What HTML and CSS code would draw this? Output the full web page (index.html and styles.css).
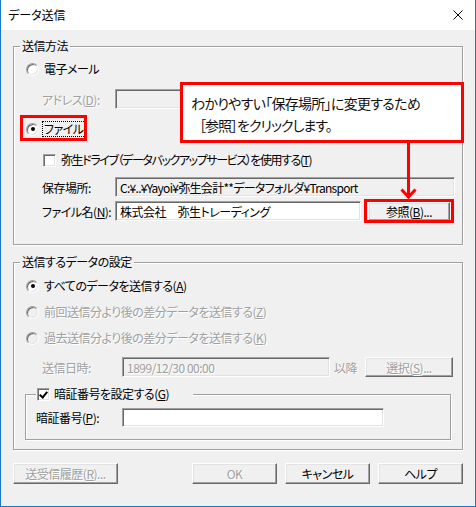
FILE: index.html
```html
<!DOCTYPE html>
<html lang="ja">
<head>
<meta charset="utf-8">
<link rel="stylesheet" href="styles.css">
</head>
<body>
<div class="window">
  <div class="titlebar">
    <span class="title">データ送信</span>
    <svg class="close" width="10" height="10" viewBox="0 0 10 10"><path d="M0.5 0.5L9.5 9.5M9.5 0.5L0.5 9.5" stroke="#000" stroke-width="1" fill="none"/></svg>
  </div>
  <div class="body">
    <fieldset class="group g1">
      <legend>送信方法</legend>
      <div class="row r-mail"><span class="radio"></span><span class="lbl">電子メール</span></div>
      <div class="row r-addr indent"><span class="flabel dis">アドレス(<u>D</u>):</span><span class="edit ro wide"></span></div>
      <div class="row r-file"><span class="radio checked"></span><span class="lbl focus">ファイル</span></div>
      <div class="row r-drive indent1"><span class="check"></span><span class="lbl drive">弥生ドライブ（データバックアップサービス）を使用する(<u>T</u>)</span></div>
      <div class="row r-loc indent"><span class="flabel">保存場所:</span><span class="edit ro wide path">C:¥..¥Yayoi¥弥生会計**データフォルダ¥Transport</span></div>
      <div class="row r-name indent"><span class="flabel">ファイル名(<u>N</u>):</span><span class="edit name">株式会社　弥生トレーディング</span><span class="btn browse">参照(<u>B</u>)...</span></div>
    </fieldset>
    <fieldset class="group g2">
      <legend>送信するデータの設定</legend>
      <div class="row r-all"><span class="radio checked"></span><span class="lbl">すべてのデータを送信する(<u>A</u>)</span></div>
      <div class="row r-prev dis"><span class="radio off"></span><span class="lbl">前回送信分より後の差分データを送信する(<u>Z</u>)</span></div>
      <div class="row r-past dis"><span class="radio off"></span><span class="lbl">過去送信分より後の差分データを送信する(<u>K</u>)</span></div>
      <div class="row r-date indent"><span class="flabel dlabel dis">送信日時:</span><span class="edit ro date dis">1899/12/30 00:00</span><span class="after dis">以降</span><span class="btn select dis">選択(<u>S</u>)...</span></div>
      <fieldset class="inner">
        <legend><span class="check checked"></span><span class="lbl">暗証番号を設定する(<u>G</u>)</span></legend>
        <div class="row r-pin"><span class="flabel plabel">暗証番号(<u>P</u>):</span><span class="edit pin"></span></div>
      </fieldset>
    </fieldset>
    <div class="buttons">
      <span class="btn hist dis">送受信履歴(<u>R</u>)...</span>
      <span class="btn ok dis">OK</span>
      <span class="btn">キャンセル</span>
      <span class="btn">ヘルプ</span>
    </div>
  </div>

  <div class="mark mark-file"></div>
  <div class="mark mark-browse"></div>
  <div class="callout">
    <p class="c1">わかりやすい「保存場所」に変更するため</p>
    <p class="c2">［参照］をクリックします。</p>
  </div>
  <svg class="arrow" width="22" height="60" viewBox="0 0 22 60">
    <path d="M10.5 0V56" stroke="#f00" stroke-width="3" fill="none"/>
    <path d="M3.5 47.5L10.5 55L17.5 47.5" stroke="#f00" stroke-width="3" fill="none" stroke-linejoin="miter"/>
  </svg>
</div>
</body>
</html>
```
FILE: styles.css
```css
* { box-sizing: border-box; }
body {
  margin: 0;
  font-family: "Noto Sans CJK JP", "Noto Sans", sans-serif;
  font-size: 12px;
  color: #000;
  font-feature-settings: "palt";
  letter-spacing: -0.5px;
}
u { text-decoration: underline; text-underline-offset: 1px; }
.window {
  position: relative;
  width: 476px;
  height: 507px;
  background: #f0f0f0;
  border: 1px solid #1979ca;
  border-top: none;
  display: flex;
  flex-direction: column;
}
.titlebar {
  height: 30px;
  flex: none;
  background: #fff;
  display: flex;
  align-items: center;
  padding-left: 7px;
}
.title { font-size: 12px; line-height: 16px; letter-spacing: 0; }
.close { margin-left: auto; margin-right: 12px; }
.body {
  flex: 1;
  padding: 8px 12px 0 12px;
  display: flex;
  flex-direction: column;
}
fieldset {
  margin: 0;
  border: 1px solid #a0a0a0;
  box-shadow: inset 1px 1px #fff, 1px 1px #fff;
  min-width: 0;
}
legend {
  line-height: 16px;
  background: #f0f0f0;
}
.group { padding: 0 7px 23px 12px; }
.group > legend { margin-left: -6px; padding: 0 2px; }
.g2 { margin-top: 9px; padding-bottom: 9px; }
.row { display: flex; align-items: center; height: 16px; white-space: nowrap; }
.indent { padding-left: 16px; }
.indent1 { padding-left: 17px; }
.r-mail { margin-top: 7px; }
.r-addr { margin-top: 12px; height: 20px; }
.r-file { margin-top: 12px; }
.r-drive { margin-top: 15px; }
.r-loc { margin-top: 9px; height: 20px; }
.r-name { margin-top: 4px; height: 20px; }
.r-all { margin-top: 8px; }
.r-prev, .r-past { margin-top: 10px; }
.r-date { margin-top: 11px; height: 20px; }

.lbl { margin-left: 5px; line-height: 14px; }
.drive { letter-spacing: -1.4px; }
.path { letter-spacing: -0.7px; }
.focus { outline: 1px dotted #000; outline-offset: 0; padding: 0 1px; margin-left: 4px; }
.flabel { width: 73px; flex: none; }
.dlabel { width: 80px; }
.dis, .dis .lbl { color: #a0a0a0; text-shadow: 1px 1px 0 #fff; }

.radio {
  flex: none;
  position: relative;
  width: 13px;
  height: 13px;
  border-radius: 50%;
  border: 1px solid;
  border-color: #a0a0a0 #fff #fff #a0a0a0;
  background: #fff;
  box-shadow: inset 1px 1px #696969, inset -1px -1px #e3e3e3;
}
.radio.checked::after {
  content: "";
  position: absolute;
  left: 3.5px;
  top: 3.5px;
  width: 4px;
  height: 4px;
  border-radius: 50%;
  background: #000;
}
.radio.off { background: #f0f0f0; }
.check {
  flex: none;
  display: inline-block;
  position: relative;
  width: 13px;
  height: 13px;
  border: 1px solid;
  border-color: #a0a0a0 #fff #fff #a0a0a0;
  background: #fff;
  box-shadow: inset 1px 1px #696969, inset -1px -1px #e3e3e3;
  vertical-align: middle;
}
.check.checked::after {
  content: "";
  position: absolute;
  left: 3px;
  top: 1px;
  width: 3px;
  height: 6px;
  border: solid #000;
  border-width: 0 2px 2px 0;
  transform: rotate(40deg);
}
.edit {
  flex: none;
  height: 20px;
  border: 1px solid;
  border-color: #a0a0a0 #fff #fff #a0a0a0;
  box-shadow: inset 1px 1px #696969, inset -1px -1px #e3e3e3;
  background: #fff;
  padding: 0 4px;
  display: flex;
  align-items: center;
  white-space: nowrap;
  overflow: hidden;
}
.edit.ro { background: #f0f0f0; }
.wide { width: 340px; }
.name { width: 246px; }
.date { width: 208px; }
.after { margin-left: 4px; }
.btn {
  flex: none;
  display: flex;
  align-items: center;
  justify-content: center;
  height: 20px;
  background: #f0f0f0;
  border: 1px solid;
  border-color: #fff #696969 #696969 #fff;
  box-shadow: inset -1px -1px #a0a0a0, inset 1px 1px #e3e3e3;
  white-space: nowrap;
}
.browse { width: 82px; margin-left: 7px; height: 19px; }
.select { width: 88px; margin-left: 8px; }

.inner {
  margin-top: 10px;
  margin-left: -1px;
  width: 426px;
  padding: 0 8px 12px 10px;
}
.inner > legend {
  padding: 0 24px 0 1px;
  display: flex;
  align-items: center;
}
.inner > legend .lbl { margin-left: 4px; }
.r-pin { margin-top: 7px; height: 19px; }
.plabel { width: 86px; }
.pin { width: 262px; height: 19px; }

.buttons {
  margin-top: 13px;
  display: flex;
  gap: 8px;
}
.buttons .btn { width: 85px; height: 21px; }
.buttons .hist { width: 105px; margin-right: auto; }

.mark { position: absolute; border: 3px solid #f00; }
.mark-file { left: 19px; top: 115px; width: 67px; height: 26px; }
.mark-browse { left: 363px; top: 199px; width: 90px; height: 24px; }
.callout {
  position: absolute;
  left: 179px;
  top: 82px;
  width: 284px;
  height: 61px;
  background: #fff;
  border: 3px solid #f00;
  padding: 7px 0 0 8px;
  font-size: 14px;
  line-height: 22px;
  letter-spacing: -0.7px;
  color: #111;
}
.callout p { margin: 0; }
.c2 { padding-left: 8px; letter-spacing: -1px; }
.arrow { position: absolute; left: 397px; top: 142px; }
```
